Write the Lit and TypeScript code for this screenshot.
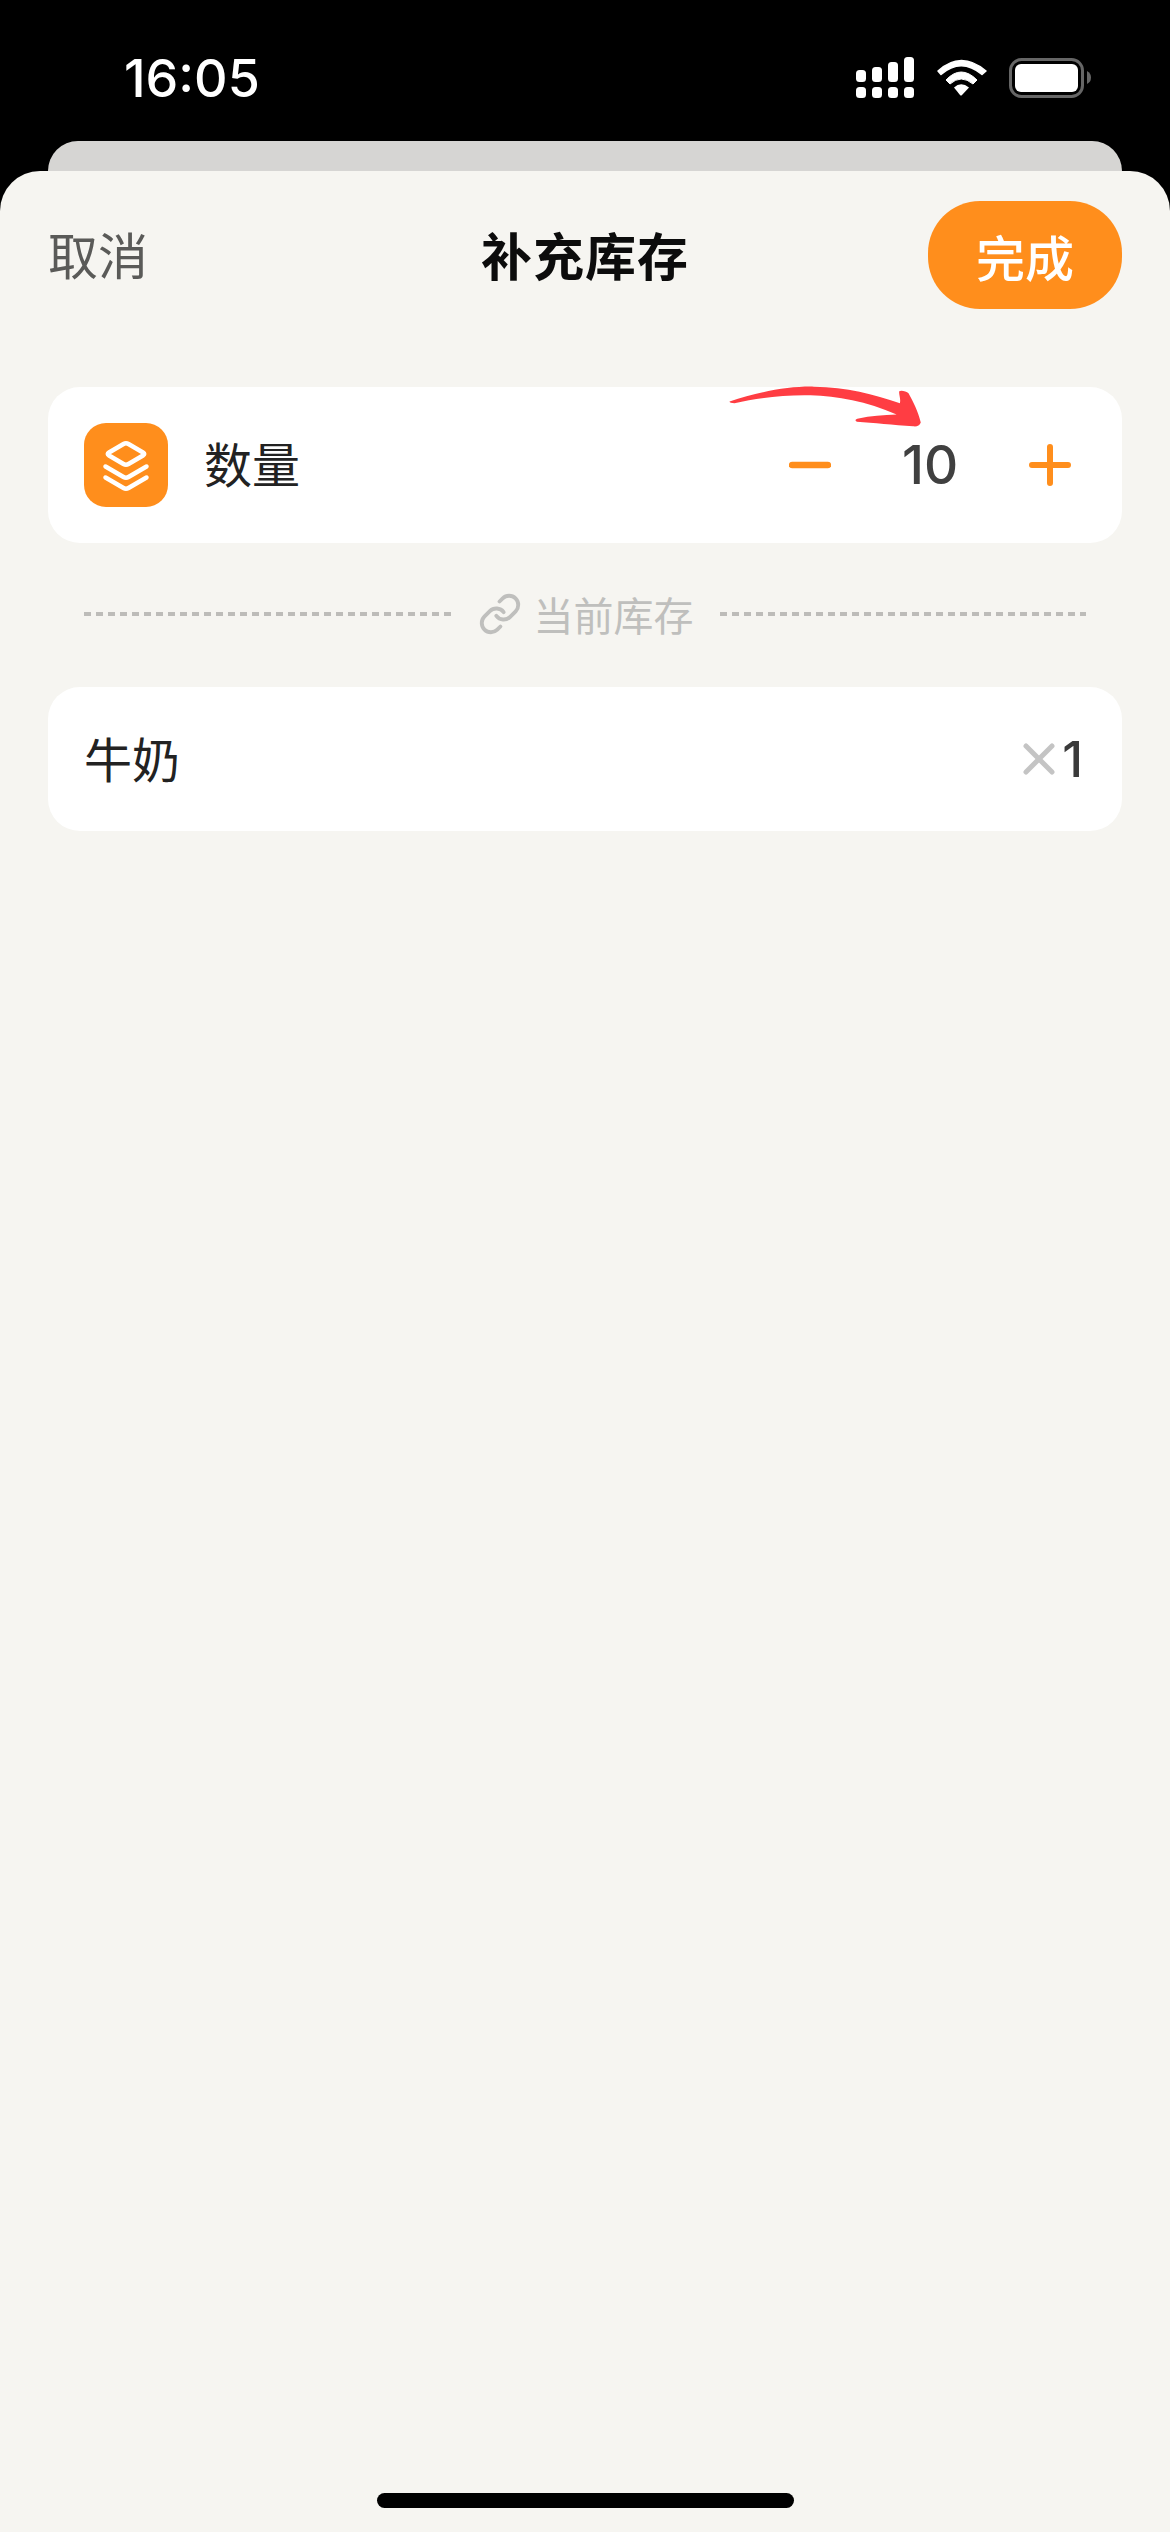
import { LitElement, html, css } from "lit";
import { customElement, state } from "lit/decorators.js";

@customElement("app-root")
export class AppRoot extends LitElement {
  @state() quantity = 10;

  static styles = css`
    :host {
      display: flex;
      flex-direction: column;
      width: 1170px;
      height: 2532px;
      background: #000;
      overflow: hidden;
      font-family: "Noto Sans CJK SC", "Noto Sans", sans-serif;
    }
    .status {
      height: 141px;
      display: flex;
      align-items: flex-start;
      flex: none;
      position: relative;
    }
    .time {
      margin: 48px 0 0 124px;
      font-family: Inter, sans-serif;
      font-size: 52px;
      line-height: 62px;
      font-weight: 500;
      color: #fff;
    }
    .status-icons {
      margin-left: auto;
      margin-top: 54px;
      margin-right: 76px;
      width: 240px;
      height: 48px;
      display: block;
    }
    .back-card {
      flex: none;
      height: 30px;
      margin: 0 48px;
      background: #d6d5d3;
      border-radius: 30px 30px 0 0;
    }
    .sheet {
      flex: 1;
      display: flex;
      flex-direction: column;
      background: #f6f5f1;
      border-radius: 40px 40px 0 0;
      padding: 30px 48px 24px;
    }
    .header {
      display: grid;
      grid-template-columns: 1fr auto 1fr;
      align-items: center;
      height: 108px;
    }
    .cancel {
      font-size: 50px;
      color: #5a5a58;
      margin-top: -5px;
    }
    .title {
      font-size: 51px;
      font-weight: 700;
      color: #0c0c0c;
      letter-spacing: 1px;
      margin-top: -3px;
    }
    .done {
      justify-self: end;
      width: 194px;
      height: 108px;
      display: flex;
      align-items: center;
      justify-content: center;
      background: #ff8e1c;
      border-radius: 52px;
      color: #fff;
      font-size: 49px;
      font-weight: 500;
    }
    .card {
      position: relative;
      display: flex;
      align-items: center;
      background: #fff;
      border-radius: 32px;
    }
    .quantity {
      margin-top: 78px;
      height: 156px;
      padding: 0 51px 0 36px;
    }
    .app-icon {
      width: 84px;
      height: 84px;
      border-radius: 22px;
      background: #ff8e1c;
      flex: none;
      display: block;
    }
    .label {
      margin-left: 36px;
      margin-top: -7px;
      font-size: 48px;
      color: #222;
    }
    .stepper {
      margin-left: auto;
      display: flex;
      align-items: center;
      gap: 61px;
    }
    .step {
      width: 42px;
      height: 42px;
      display: block;
    }
    .num {
      width: 76px;
      text-align: center;
      font-family: Inter, sans-serif;
      font-size: 53px;
      font-weight: 500;
      color: #404040;
    }
    .arrow {
      position: absolute;
      left: 679px;
      top: -2px;
      width: 197px;
      height: 43px;
    }
    .divider {
      height: 144px;
      padding: 0 36px 3px;
      box-sizing: border-box;
      display: flex;
      align-items: center;
    }
    .dash {
      flex: 1;
      height: 4px;
      background: repeating-linear-gradient(90deg, #bdbcb9 0 7px, transparent 7px 12px);
    }
    .link-label {
      display: flex;
      align-items: center;
      margin: 0 26px 0 27px;
      font-size: 40px;
      color: #bfbfbd;
    }
    .link-icon {
      width: 44px;
      height: 44px;
      margin-right: 12px;
    }
    .item {
      height: 144px;
      padding: 0 39px 0 36px;
    }
    .item-name {
      font-size: 48px;
      color: #222;
      margin-top: -5px;
    }
    .item-count {
      margin-left: auto;
      display: flex;
      align-items: center;
      gap: 6px;
      font-family: Inter, sans-serif;
      font-size: 50px;
      font-weight: 500;
      color: #3a3a3a;
    }
    .times {
      width: 34px;
      height: 34px;
      display: block;
    }
    .home {
      margin-top: auto;
      align-self: center;
      width: 417px;
      height: 15px;
      border-radius: 8px;
      background: #000;
    }
  `;

  private statusIcons() {
    return html`<svg class="status-icons" viewBox="854 54 240 48" fill="#fff">
      <rect x="856" y="70" width="10" height="12" rx="3.500"/>
      <rect x="872" y="67" width="10" height="15" rx="3.500"/>
      <rect x="888" y="62" width="10" height="20" rx="3.500"/>
      <rect x="904" y="57" width="10" height="25" rx="3.500"/>
      <rect x="856" y="87" width="10" height="11" rx="3.500"/>
      <rect x="872" y="87" width="10" height="11" rx="3.500"/>
      <rect x="888" y="87" width="10" height="11" rx="3.500"/>
      <rect x="904" y="87" width="10" height="11" rx="3.500"/>
      <path d="M938 71 L941 74.500 Q961 57 982 74.500 L986 71 Q961 50 938 71 Z" stroke="#fff" stroke-width="1.500" stroke-linejoin="round"/>
      <path d="M946 80 L950 84 Q961 74 973 84 L977 80 Q961 64 946 80 Z" stroke="#fff" stroke-width="1" stroke-linejoin="round"/>
      <path d="M954 87.500 Q961 81 969 87.500 L962 95 Q961 96 960 95 Z"/>
      <rect x="1010.500" y="59.500" width="72" height="37" rx="11" fill="none" stroke="#666" stroke-width="3"/>
      <rect x="1015" y="64" width="63" height="28" rx="6"/>
      <path d="M1087 71 Q1091 73 1091 77.500 Q1091 82 1087 84 Z" fill="#666"/>
    </svg>`;
  }

  private layersIcon() {
    return html`<svg class="app-icon" viewBox="0 0 84 84" fill="none" stroke="#fff" stroke-width="4.500" stroke-linecap="round" stroke-linejoin="round">
      <path d="M39.500 21 Q42 19.500 44.500 21 L59 29.500 Q61.500 31 59 32.500 L44.500 41 Q42 42.500 39.500 41 L25 32.500 Q22.500 31 25 29.500 Z"/>
      <path d="M21.500 43.500 L39.500 54 Q42 55.500 44.500 54 L62.500 43.500"/>
      <path d="M21.500 54.500 L39.500 65 Q42 66.500 44.500 65 L62.500 54.500"/>
    </svg>`;
  }

  render() {
    return html`
      <div class="status">
        <div class="time">16:05</div>
        ${this.statusIcons()}
      </div>
      <div class="back-card"></div>
      <div class="sheet">
        <div class="header">
          <div class="cancel">取消</div>
          <div class="title">补充库存</div>
          <div class="done">完成</div>
        </div>

        <div class="card quantity">
          ${this.layersIcon()}
          <div class="label">数量</div>
          <div class="stepper">
            <svg class="step" viewBox="0 0 42 42" stroke="#ff8e1c" stroke-width="6.500" stroke-linecap="round">
              <path d="M3 21H39"/>
            </svg>
            <div class="num">${this.quantity}</div>
            <svg class="step" viewBox="0 0 42 42" stroke="#ff8e1c" stroke-width="6" stroke-linecap="round">
              <path d="M3 21H39M21 3V39"/>
            </svg>
          </div>
          <svg class="arrow" viewBox="80 45 590 130" fill="#ff3d43">
            <path d="M85 95 C170 65 270 48 340 50 C440 52 520 72 600 100 C603 85 596 72 598 64 C603 60 620 64 626 70 C640 95 655 125 663 158 C660 168 650 172 640 170 C580 165 520 160 470 156 C462 152 466 148 475 146 C510 138 550 136 590 134 C500 95 410 78 330 76 C250 74 170 85 100 100 C90 100 84 98 85 95 Z"/>
          </svg>
        </div>

        <div class="divider">
          <div class="dash"></div>
          <div class="link-label">
            <svg class="link-icon" viewBox="0 0 24 24" fill="none" stroke="#bfbfbd" stroke-width="2.100" stroke-linecap="round" stroke-linejoin="round">
              <path d="M10 13a5 5 0 0 0 7.540.54l3-3a5 5 0 0 0-7.070-7.070l-1.720 1.710"/>
              <path d="M14 11a5 5 0 0 0-7.540-.54l-3 3a5 5 0 0 0 7.070 7.070l1.710-1.710"/>
            </svg>
            当前库存
          </div>
          <div class="dash"></div>
        </div>

        <div class="card item">
          <div class="item-name">牛奶</div>
          <div class="item-count">
            <svg class="times" viewBox="0 0 34 34" stroke="#c4c4c4" stroke-width="5" stroke-linecap="round">
              <path d="M4 4L30 30M30 4L4 30"/>
            </svg>
            <span>1</span>
          </div>
        </div>

        <div class="home"></div>
      </div>
    `;
  }
}
